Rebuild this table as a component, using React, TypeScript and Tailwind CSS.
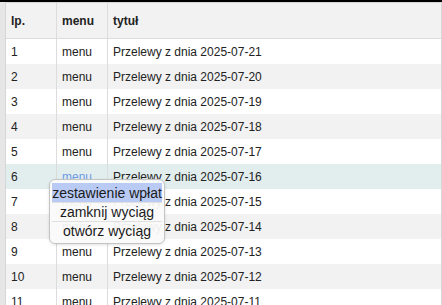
import React from "react";

// Lista wyciągów z otwartym menu kontekstowym przy wierszu 6.

const rows = Array.from({ length: 12 }, (_, i) => ({
  lp: i + 1,
  title: `Przelewy z dnia 2025-07-${String(21 - i).padStart(2, "0")}`,
}));

const menuItems = ["zestawienie wpłat", "zamknij wyciąg", "otwórz wyciąg"];

export default function App() {
  return (
    <div
      className="relative h-[305px] w-[442px] overflow-hidden border-t-2 border-black bg-[#e6e6e6] pl-[5px] text-[12px] text-[#222]"
      style={{ fontFamily: '"Liberation Sans", Arial, sans-serif' }}
    >
      <div className="border-l border-r border-t border-[#d6d6d6] bg-white">
        <div className="grid h-[36px] grid-cols-[51px_51px_1fr] border-b border-[#dcdcdc] bg-[#f2f2f2] font-bold">
          <div className="flex items-center border-r border-[#dcdcdc] pl-[5px]">lp.</div>
          <div className="flex items-center border-r border-[#dcdcdc] pl-[5px]">menu</div>
          <div className="flex items-center pl-[5px]">tytuł</div>
        </div>
        {rows.map((r) => {
          const hover = r.lp === 6;
          const bg = hover ? "bg-[#e2eeee]" : r.lp % 2 === 0 ? "bg-[#f2f2f2]" : "bg-white";
          return (
            <div key={r.lp} className={`grid h-[25px] grid-cols-[51px_51px_1fr] ${bg}`}>
              <div className="flex items-center border-r border-[#dcdcdc] pl-[5px]">{r.lp}</div>
              <div
                className={`flex items-center border-r border-[#dcdcdc] pl-[5px] ${
                  hover ? "text-[#6f9be6]" : ""
                }`}
              >
                menu
              </div>
              <div className="flex items-center pl-[5px]">{r.title}</div>
            </div>
          );
        })}
      </div>

      <div className="absolute left-[49px] top-[177px] w-[116px] rounded-md border border-[#c4c4c4] bg-[#fafafa]/95 px-[2px] py-[3px] text-[14px] text-[#1a1a1a] shadow-[0_1px_3px_rgba(0,0,0,0.12)]">
        {menuItems.map((item, i) => (
          <div
            key={item}
            className={`flex h-[19px] items-center justify-center whitespace-nowrap leading-none ${
              i === 0 ? "bg-[#b9cbf5]" : "border-t border-[#e0e0e0]"
            }`}
          >
            {item}
          </div>
        ))}
      </div>
    </div>
  );
}
